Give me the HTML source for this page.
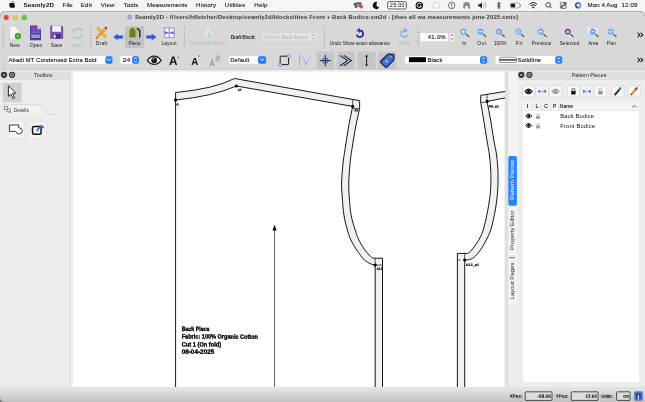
<!DOCTYPE html>
<html><head><meta charset="utf-8"><title>Seamly2D</title>
<style>
html,body{margin:0;padding:0}
body{width:645px;height:402px;overflow:hidden;background:#ececec;font-family:"Liberation Sans",sans-serif;position:relative}
svg{position:absolute;left:0;top:0;will-change:transform}
.t{position:absolute;white-space:nowrap;margin:0;padding:0;will-change:transform}
</style></head><body>
<svg width="645" height="402" viewBox="0 0 645 402">
<defs>
<linearGradient id="gs" x1="0" y1="0" x2="0" y2="1"><stop offset="0" stop-color="#e3e3e3"/><stop offset="1" stop-color="#c2c2c2"/></linearGradient>
<linearGradient id="gb" x1="0" y1="0" x2="0" y2="1"><stop offset="0" stop-color="#3a8ffa"/><stop offset="1" stop-color="#176ff0"/></linearGradient>
<linearGradient id="gpage" x1="0" y1="0" x2="1" y2="1"><stop offset="0" stop-color="#faf8f0"/><stop offset="0.5" stop-color="#f4f4f4"/><stop offset="1" stop-color="#d0d0d0"/></linearGradient>
</defs>
<rect x="0.00" y="0.00" width="645.00" height="11.00" fill="#f5f5f5"/>
<rect x="0.00" y="11.00" width="645.00" height="60.00" fill="#d8d8d8"/>
<path d="M0 10.500 H645 V16.500 Q645 11.300 639.800 11.300 H5.200 Q0 11.300 0 16.500 Z" fill="#f5f5f5"/>
<path d="M0.200 16.500 Q0.200 11.500 5.200 11.500 H639.800 Q644.800 11.500 644.800 16.500" fill="none" stroke="#a9a9a9" stroke-width="0.900"/>
<rect x="5.00" y="12.00" width="635.00" height="0.70" fill="#e2e2e2"/>
<rect x="0.00" y="69.20" width="645.00" height="0.80" fill="#c9c9c9"/>
<rect x="0.00" y="70.00" width="645.00" height="1.20" fill="#e6e6e6"/>
<rect x="0.00" y="71.20" width="645.00" height="331.00" fill="#ececec"/>
<rect x="70.70" y="70.00" width="436.00" height="318.00" fill="#f0f0f0"/>
<rect x="73.30" y="72.40" width="431.40" height="314.20" fill="#ffffff"/>
<rect x="70.00" y="71.20" width="0.70" height="317.00" fill="#d0d0d0"/>
<rect x="0.00" y="388.60" width="645.00" height="13.40" fill="url(#gs)"/>
<rect x="0.00" y="387.60" width="645.00" height="0.70" fill="#d4d4d4"/>
<path d="M0 402 V397.500 Q0.300 401.700 4.600 402 Z" fill="#777"/>
<path transform="translate(8.300,0.400) scale(0.440)" d="M12.2 5.2c-1 0-2.2.6-3 .6-.9 0-2-.6-3.100-.6C3.900 5.200 2 6.900 2 10c0 3.200 2.200 7 4 7 .9 0 1.600-.6 2.800-.6 1.200 0 1.700.6 2.800.6 1.800 0 3.700-3.200 4-5-1.600-.7-2.400-2-2.400-3.300 0-1.300.7-2.300 1.800-3-.8-.4-1.800-.5-2.800-.5zM11.500 1c-1.400.3-2.700 1.700-2.500 3.500 1.500-.1 2.800-1.600 2.500-3.500z" fill="#111"/>
<circle cx="355.3" cy="4.2" r="1.5" fill="#444"/>
<circle cx="357.6" cy="3.2" r="1.5" fill="#777"/>
<circle cx="360.0" cy="3.6" r="1.5" fill="#555"/>
<circle cx="356.0" cy="6.6" r="1.5" fill="#666"/>
<circle cx="358.6" cy="5.6" r="1.5" fill="#888"/>
<circle cx="361.2" cy="6.6" r="1.9" fill="#e5483c"/>
<path d="M377.4 2.0 A3.6 3.6 0 1 0 379.3 7.6 A3.3 3.3 0 0 1 377.4 2.0 Z" fill="#111"/>
<rect x="387.60" y="1.60" width="18.80" height="7.40" fill="none" rx="1.60" stroke="#222" stroke-width="0.7"/>
<circle cx="419.3" cy="5.4" r="3.7" fill="#111"/><path d="M421.2 4.2 A2.1 2.1 0 1 0 421.4 6 H419.6" fill="none" stroke="#fff" stroke-width="0.9"/>
<rect x="433.40" y="2.60" width="6.40" height="5.40" fill="none" rx="0.60" stroke="#c4c4c4" stroke-width="0.7"/>
<path d="M432 3 v4.600" stroke="#c4c4c4" stroke-width="0.7" stroke-dasharray="1 0.8"/>
<circle cx="451.7" cy="5.4" r="3.2" fill="none" stroke="#333" stroke-width="0.7"/><path d="M451.7 3.6 v2.200 M451.7 6.6 v0.700" stroke="#333" stroke-width="0.8"/>
<path d="M463.2 8.6 V5.6 A3.4 3.6 0 0 1 470 5.6 V8.6 H468 V6 H465.2 V8.6 Z" fill="#8a8a8a"/>
<path d="M478.3 4.200 h1.600 l2 -1.800 v6 l-2 -1.800 h-1.600 Z" fill="#111"/><path d="M483.4 3.4 q1.400 2 0 4 M485 2.400 q2.200 3 0 6" fill="none" stroke="#999" stroke-width="0.7"/>
<path d="M497.2 3.6 l3.200 3.400 -1.700 1.700 v-6.800 l1.700 1.700 -3.200 3.400" fill="none" stroke="#111" stroke-width="0.7"/>
<rect x="510.20" y="3.10" width="9.60" height="4.80" fill="none" rx="1.30" stroke="#777" stroke-width="0.6"/>
<rect x="510.90" y="3.80" width="4.20" height="3.40" fill="#111" rx="0.70"/>
<rect x="520.20" y="4.60" width="0.80" height="1.80" fill="#777" rx="0.40"/>
<path d="M529.6 4.300 Q533.3 0.900 537 4.300 M530.900 5.800 Q533.3 3.600 535.700 5.800" fill="none" stroke="#111" stroke-width="1"/><circle cx="533.3" cy="7.400" r="0.900" fill="#111"/>
<circle cx="548.2" cy="4.800" r="2.300" fill="none" stroke="#222" stroke-width="0.800"/><path d="M549.900 6.500 l1.800 1.800" stroke="#222" stroke-width="0.900"/>
<rect x="560.20" y="2.40" width="6.20" height="2.60" fill="none" rx="1.20" stroke="#222" stroke-width="0.6"/>
<rect x="560.20" y="5.80" width="6.20" height="2.60" fill="none" rx="1.20" stroke="#222" stroke-width="0.6"/>
<circle cx="564.900" cy="3.700" r="0.900" fill="#222"/><circle cx="561.700" cy="7.100" r="0.900" fill="#222"/>
<circle cx="578" cy="5.300" r="3.100" fill="#3a3f86"/><path d="M578 2.200 a3.100 3.100 0 0 1 0 6.200 Z" fill="#3aa6c4"/><path d="M578 2.200 a3.100 3.100 0 0 0 -2.700 4.600 L578 5.300 Z" fill="#7a4aa8"/><circle cx="578.200" cy="5.300" r="1.400" fill="#fff"/>
<circle cx="6.2" cy="17.5" r="2.75" fill="#ee5f58"/>
<circle cx="15.2" cy="17.5" r="2.75" fill="#f4bd4f"/>
<circle cx="24.3" cy="17.5" r="2.75" fill="#5fc454"/>
<circle cx="6.2" cy="17.5" r="0.9" fill="#8a1712"/>
<circle cx="129.6" cy="17.1" r="2.3" fill="#9a8bc9"/><circle cx="129.6" cy="17.1" r="1.1" fill="#c9c0e6"/>
<path d="M3.4 26.6 V47.4" stroke="#868686" stroke-width="0.9" stroke-dasharray="0.9 1.85"/>
<path d="M90.6 26.6 V47.4" stroke="#868686" stroke-width="0.9" stroke-dasharray="0.9 1.85"/>
<path d="M184.4 26.6 V47.4" stroke="#868686" stroke-width="0.9" stroke-dasharray="0.9 1.85"/>
<path d="M324.4 26.6 V47.4" stroke="#868686" stroke-width="0.9" stroke-dasharray="0.9 1.85"/>
<path d="M418.0 26.6 V47.4" stroke="#868686" stroke-width="0.9" stroke-dasharray="0.9 1.85"/>
<path d="M10 26.400 h6.800 l3.200 3.200 v10.200 h-10 Z" fill="url(#gpage)" stroke="#c9c9c9" stroke-width="0.400"/><path d="M16.800 26.400 v3.200 h3.200 Z" fill="#d9d9d9" stroke="#bdbdbd" stroke-width="0.300"/>
<circle cx="17.900" cy="36.100" r="3.100" fill="#2f9e22"/><circle cx="17.900" cy="36.100" r="1.500" fill="#48c23a"/><path d="M17.900 34.200 v3.800 M16 36.100 h3.800" stroke="#63d455" stroke-width="0.900"/>
<path d="M30 25.400 h7.200 l3.800 3.800 v11 h-11 Z" fill="#5b3fa8"/><path d="M37.200 25.400 v3.800 h3.800 Z" fill="#cfc4ee"/>
<rect x="30.00" y="35.40" width="11.00" height="3.60" fill="#47308f"/>
<rect x="31.40" y="27.60" width="4.60" height="0.60" fill="#8e7bd0"/>
<rect x="31.40" y="29.20" width="4.60" height="0.60" fill="#8e7bd0"/>
<rect x="31.40" y="30.80" width="8.20" height="0.60" fill="#8e7bd0"/>
<rect x="31.40" y="32.40" width="8.20" height="0.60" fill="#8e7bd0"/>
<rect x="31.40" y="34.00" width="8.20" height="0.60" fill="#8e7bd0"/>
<path d="M50.200 25.400 h11.200 l1.800 1.800 v11.600 h-13 Z" fill="#7a4fb6"/>
<rect x="52.20" y="25.60" width="8.80" height="6.20" fill="#f3eff9"/>
<rect x="52.80" y="34.00" width="7.80" height="4.80" fill="#48308a"/>
<rect x="53.60" y="34.60" width="2.00" height="3.60" fill="#e2dbf1"/>
<g opacity="0.45"><path d="M73.200 33 A4.500 4.500 0 0 1 81 30" fill="none" stroke="#7cc47a" stroke-width="1.800"/><path d="M82 34 A4.500 4.500 0 0 1 74.200 37" fill="none" stroke="#7cc47a" stroke-width="1.800"/><path d="M79.600 30.600 l3 0.400 -0.400 -3 Z M75.600 36.400 l-3 -0.400 0.400 3 Z" fill="#7cc47a"/></g>
<path d="M96.400 28.400 l1.800 -1.600 8.600 9.800 -1.800 1.600 Z" fill="#f2b430" stroke="#d18a1c" stroke-width="0.300"/>
<path d="M104.600 27.600 l1.900 1.700 -8 8.600 -2.600 0.900 0.700 -2.600 Z" fill="#f0a23a" stroke="#c9731f" stroke-width="0.300"/><path d="M104.600 27.600 l1.900 1.700 0.900 -1 -1.900 -1.700 Z" fill="#8a1a3a"/><path d="M95.900 38.800 l0.400 -1.300 0.900 0.900 Z" fill="#333"/>
<path d="M113.0 37.0 l5.0 -3.6 v1.9 H123.2 v3.4 H118.0 v1.9 Z" fill="#2c56d8" stroke="#b9c8f3" stroke-width="0.500" stroke-linejoin="round"/>
<path d="M156.7 37.0 l-5.0 -3.6 v1.9 H146.0 v3.4 H151.7 v1.9 Z" fill="#2c56d8" stroke="#b9c8f3" stroke-width="0.500" stroke-linejoin="round"/>
<rect x="125.00" y="26.20" width="19.20" height="21.80" fill="#c1c1c1" rx="0.80"/>
<path d="M129.400 37.500 V31.400 Q129.800 28.600 132.200 27.500 Q135 27.500 135.600 31 V37.500 Z" fill="#717f12" stroke="#a4ad5a" stroke-width="0.400"/>
<path d="M137.200 28.600 Q139.600 29 139.800 32 V37" fill="none" stroke="#16190a" stroke-width="1.300" stroke-linecap="round"/><path d="M136.900 29 V37" stroke="#8a963a" stroke-width="0.500"/>
<rect x="163.80" y="27.50" width="11.00" height="10.50" fill="#9d90da" rx="0.80"/>
<rect x="164.80" y="28.50" width="3.90" height="3.70" fill="#fbfaff" rx="0.40"/>
<rect x="169.90" y="28.50" width="3.90" height="3.70" fill="#fbfaff" rx="0.40"/>
<rect x="164.80" y="33.40" width="3.90" height="3.70" fill="#fbfaff" rx="0.40"/>
<rect x="169.90" y="33.40" width="3.90" height="3.70" fill="#fbfaff" rx="0.40"/>
<path d="M165 31 l3.400 1.750 -3.400 1.750 Z M173.600 31 l-3.400 1.750 3.400 1.750 Z" fill="#5468dc"/>
<g opacity="0.8"><path d="M206.200 27.600 h3 l0.800 3.200 2.800 1.200 1 5.600 h-10 l0.600 -5.200 1.400 -1.400 Z" fill="#e9e9e9" stroke="#c4c4c4" stroke-width="0.400"/><path d="M209.200 32.200 v4 M207.200 34.600 l2 2.200 2 -2.200" stroke="#a8cfa4" stroke-width="1.300" fill="none"/></g>
<rect x="261.20" y="32.70" width="56.30" height="8.50" fill="#e3e3e3" rx="2.00" stroke="#d0d0d0" stroke-width="0.4"/>
<path d="M311.800 36 l1.400 -1.500 1.400 1.500 M311.800 38 l1.400 1.500 1.400 -1.500" fill="none" stroke="#8a8a8a" stroke-width="0.600"/>
<path d="M359.600 30.700 A3.200 3.200 0 1 1 356.800 34.600" fill="none" stroke="#16269a" stroke-width="1.600"/><path d="M356.300 30.500 l3.700 -2.700 v5.200 Z" fill="#2348c8"/>
<path d="M404.600 30.700 A3.200 3.200 0 1 0 407.400 34.600" fill="none" stroke="#8fb0e8" stroke-width="1.600"/><path d="M407.900 30.500 l-3.700 -2.700 v5.200 Z" fill="#7ea4e6"/>
<rect x="420.60" y="33.00" width="27.40" height="8.20" fill="#ffffff" rx="0.60"/>
<rect x="449.40" y="33.00" width="5.00" height="8.20" fill="#fdfdfd" rx="1.60" stroke="#cfcfcf" stroke-width="0.4"/>
<path d="M450.600 36.100 l1.300 -1.500 1.300 1.500 M450.600 38.100 l1.300 1.500 1.300 -1.500" fill="none" stroke="#333" stroke-width="0.700"/>
<path d="M465.8 34.0 l3.000 2.600" stroke="#4c4c4c" stroke-width="1.150" stroke-linecap="round"/>
<circle cx="463.4" cy="31.7" r="3.250" fill="#6a9fe4" stroke="#b7cff0" stroke-width="1.000"/>
<path d="M463.4 31.7 m-1.800 0 h3.600 m-1.800 -1.800 v3.600" stroke="#fff" stroke-width="1.100"/>
<path d="M482.8 34.0 l3.000 2.600" stroke="#4c4c4c" stroke-width="1.150" stroke-linecap="round"/>
<circle cx="480.4" cy="31.7" r="3.250" fill="#6a9fe4" stroke="#b7cff0" stroke-width="1.000"/>
<path d="M480.4 31.7 m-1.800 0 h3.600" stroke="#fff" stroke-width="1.100"/>
<path d="M501.4 34.0 l3.000 2.600" stroke="#4c4c4c" stroke-width="1.150" stroke-linecap="round"/>
<circle cx="499.0" cy="31.7" r="3.250" fill="#6a9fe4" stroke="#b7cff0" stroke-width="1.000"/>
<circle cx="499.0" cy="31.7" r="1.300" fill="#cfe0f7"/>
<path d="M520.8 34.0 l3.000 2.600" stroke="#4c4c4c" stroke-width="1.150" stroke-linecap="round"/>
<circle cx="518.4" cy="31.7" r="3.250" fill="#6fa5e8" stroke="#b7cff0" stroke-width="1.000"/>
<path d="M518.4 31.7 m-1.900 -1.900 l3.800 3.800 m0 -3.800 l-3.800 3.800" stroke="#fff" stroke-width="0.800"/>
<path d="M543.2 34.0 l3.000 2.600" stroke="#4c4c4c" stroke-width="1.150" stroke-linecap="round"/>
<circle cx="540.8" cy="31.7" r="3.250" fill="#6a9fe4" stroke="#b7cff0" stroke-width="1.000"/>
<path d="M540.8 31.7 m1.800 0 h-3.200 m1.200 -1.200 l-1.400 1.200 1.400 1.200" stroke="#fff" stroke-width="0.900" fill="none"/>
<path d="M570.2 34.0 l3.000 2.600" stroke="#4c4c4c" stroke-width="1.150" stroke-linecap="round"/>
<circle cx="567.8" cy="31.7" r="3.250" fill="#8e2257" stroke="#b7cff0" stroke-width="1.000"/>
<circle cx="567.8" cy="31.7" r="1.500" fill="#e9cfdc"/>
<rect x="587.40" y="27.70" width="10.00" height="6.40" fill="#f7f9fd" rx="0.80" stroke="#c3d3ec" stroke-width="0.6"/>
<path d="M595.2 34.0 l3.000 2.600" stroke="#4c4c4c" stroke-width="1.150" stroke-linecap="round"/>
<circle cx="592.8" cy="31.7" r="3.250" fill="#6a9fe4" stroke="#b7cff0" stroke-width="1.000"/>
<path d="M592.8 31.7 m-1.500 0 h3" stroke="#fff" stroke-width="0.900"/>
<path d="M613.2 34.0 l3.000 2.600" stroke="#4c4c4c" stroke-width="1.150" stroke-linecap="round"/>
<circle cx="610.8" cy="31.7" r="3.250" fill="#5c98e6" stroke="#b7cff0" stroke-width="1.000"/>
<path d="M610.8 31.7 m-2.600 0 h5.200 m-2.600 -2.600 v5.200" stroke="#dfeafa" stroke-width="0.900"/>
<path d="M637.600 32.700 l2.200 2.200 -2.200 2.200 M640.600 32.700 l2.200 2.200 -2.200 2.200" fill="none" stroke="#1c1c1c" stroke-width="1.100"/>
<path d="M3.4 52.5 V68.5" stroke="#b4b4b4" stroke-width="0.8" stroke-dasharray="0.9 1.85"/>
<path d="M272.9 52.5 V68.5" stroke="#b4b4b4" stroke-width="0.8" stroke-dasharray="0.9 1.85"/>
<path d="M400.2 52.5 V68.5" stroke="#b4b4b4" stroke-width="0.8" stroke-dasharray="0.9 1.85"/>
<rect x="8.00" y="56.10" width="104.60" height="7.70" fill="#ffffff" rx="2.00"/>
<rect x="105.40" y="56.10" width="7.20" height="7.70" fill="url(#gb)" rx="2.00"/>
<path d="M107.30 59.25 l1.700 1.700 1.700 -1.700" fill="none" stroke="#fff" stroke-width="0.950" stroke-linecap="square"/>
<rect x="120.00" y="56.10" width="19.00" height="7.70" fill="#ffffff" rx="2.00"/>
<rect x="132.10" y="56.10" width="6.90" height="7.70" fill="url(#gb)" rx="2.00"/>
<path d="M134.15 59.15 l1.400 -1.400 1.400 1.400 M134.15 60.85 l1.400 1.400 1.400 -1.400" fill="none" stroke="#fff" stroke-width="0.850"/>
<path d="M147.300 60.300 Q150.400 56.200 154.200 56.200 Q158 56.200 161.100 60.300 Q158 64.400 154.200 64.400 Q150.400 64.400 147.300 60.300 Z" fill="#f4f4f4" stroke="#1c1c1c" stroke-width="1.300" stroke-linejoin="round"/><circle cx="154.200" cy="60.200" r="2.900" fill="#1c1c1c"/><circle cx="153.300" cy="59.200" r="0.900" fill="#8a8a8a"/>
<path d="M177.400 58 l1.100 -1.800 1.100 1.800 Z" fill="#4a62e0"/>
<path d="M197.900 55.500 l1.100 1.800 1.100 -1.800 Z" fill="#4a62e0"/>
<path d="M210.300 66.500 l2 -7.200 2 7.200 M211.100 64.200 h2.500" fill="none" stroke="#8f8f8f" stroke-width="0.900"/><path d="M214.600 59.600 l3.800 -4.200 2.600 2.400 -3.800 4.200 Z" fill="#b4b4b4"/><path d="M217.200 55 l1.600 -1.600 M216.400 57 v-2.400" stroke="#9a9a9a" stroke-width="0.600"/>
<rect x="229.00" y="56.10" width="37.20" height="7.70" fill="#ffffff" rx="2.00"/>
<rect x="258.00" y="56.10" width="8.20" height="7.70" fill="url(#gb)" rx="2.00"/>
<path d="M260.40 59.25 l1.700 1.700 1.700 -1.700" fill="none" stroke="#fff" stroke-width="0.950" stroke-linecap="square"/>
<rect x="280.20" y="56.20" width="8.40" height="8.40" fill="none" rx="0.60" stroke="#1b1b1b" stroke-width="1.0"/>
<circle cx="288.600" cy="56.200" r="1.500" fill="#d9e6fa" stroke="#3a5fb0" stroke-width="0.600"/><circle cx="280.200" cy="64.600" r="1.500" fill="#d9e6fa" stroke="#3a5fb0" stroke-width="0.600"/>
<path d="M299.600 65.800 V55.600 M300 55.600 Q304 56 305.600 64.800 Q307.600 60 310.800 56.400" fill="none" stroke="#98a3d4" stroke-width="0.900"/><path d="M298.600 55.200 h2.400 M304.400 64.800 h2.400" stroke="#b9c0e4" stroke-width="0.500"/>
<rect x="316.60" y="51.40" width="17.80" height="18.00" fill="#c6c6c6" rx="0.80"/>
<rect x="337.00" y="51.40" width="18.00" height="18.00" fill="#c6c6c6" rx="0.80"/>
<rect x="357.50" y="51.40" width="18.10" height="18.00" fill="#c6c6c6" rx="0.80"/>
<rect x="377.80" y="51.40" width="18.40" height="18.00" fill="#c6c6c6" rx="0.80"/>
<path d="M319.800 60.600 h11 M325.300 55 v11.200" stroke="#1a1a1a" stroke-width="0.950"/><circle cx="325.300" cy="60.600" r="2.600" fill="none" stroke="#3a62c4" stroke-width="1.100"/>
<path d="M340 55.400 l7.600 5.200 -7.600 5.200 M343.800 55.400 l7.600 5.200 -7.600 5.200" fill="none" stroke="#1b2448" stroke-width="1.100"/>
<path d="M366.600 56.400 V65" stroke="#111" stroke-width="0.900"/><path d="M366.600 54.600 l1.400 2.200 h-2.800 Z M366.600 66.600 l1.400 -2.200 h-2.800 Z" fill="#111"/>
<path d="M380.800 61 l6.600 -6.400 q0.500 -0.500 1.200 -0.500 l4.600 0.200 q0.900 0.100 0.900 1 l-0.200 4.200 q0 0.700 -0.500 1.200 l-6.400 6.400 q-0.800 0.700 -1.600 0 l-4.600 -4.500 q-0.700 -0.800 0 -1.600 Z" fill="#3d6fd0" stroke="#131d40" stroke-width="1.100"/><circle cx="390.800" cy="57" r="1.100" fill="#e8eefb" stroke="#17264f" stroke-width="0.400"/><circle cx="386.600" cy="61.400" r="1.100" fill="#9db8ea" stroke="#dfe8fa" stroke-width="0.400"/>
<rect x="405.00" y="56.10" width="82.20" height="7.70" fill="#ffffff" rx="2.00"/>
<rect x="480.00" y="56.10" width="7.20" height="7.70" fill="url(#gb)" rx="2.00"/>
<path d="M482.20 59.15 l1.400 -1.400 1.400 1.400 M482.20 60.85 l1.400 1.400 1.400 -1.400" fill="none" stroke="#fff" stroke-width="0.850"/>
<rect x="409.00" y="57.20" width="17.00" height="5.00" fill="#000"/>
<rect x="495.40" y="56.10" width="67.00" height="7.70" fill="#ffffff" rx="2.00"/>
<rect x="555.20" y="56.10" width="7.20" height="7.70" fill="url(#gb)" rx="2.00"/>
<path d="M557.40 59.15 l1.400 -1.400 1.400 1.400 M557.40 60.85 l1.400 1.400 1.400 -1.400" fill="none" stroke="#fff" stroke-width="0.850"/>
<rect x="499.40" y="57.20" width="17.20" height="5.20" fill="#fff" rx="1.00" stroke="#444" stroke-width="0.6"/>
<path d="M499.600 59.900 h16.800" stroke="#111" stroke-width="1.200"/>
<path d="M637.600 57.800 l2.200 2.200 -2.200 2.200 M640.600 57.800 l2.200 2.200 -2.200 2.200" fill="none" stroke="#1c1c1c" stroke-width="1.100"/>
<rect x="0.00" y="71.20" width="70.30" height="8.20" fill="#e0e0e0"/>
<rect x="0.00" y="79.40" width="70.30" height="0.50" fill="#d0d0d0"/>
<circle cx="4.0" cy="74.800" r="3.100" fill="#2f2f2f"/><path d="M2.80 73.600 l2.400 2.400 m0 -2.400 l-2.400 2.400" stroke="#e6e6e6" stroke-width="0.700"/>
<circle cx="12.1" cy="74.800" r="3.100" fill="#2f2f2f"/><circle cx="12.1" cy="74.800" r="1.600" fill="none" stroke="#e6e6e6" stroke-width="0.600"/><path d="M11.10 75.800 l2 -2" stroke="#e6e6e6" stroke-width="0.500"/>
<rect x="2.60" y="83.00" width="19.00" height="19.00" fill="#cfcfcf" rx="0.60"/>
<path d="M8.400 85.700 V96.400 L10.900 94.100 L13 98.600 L14.700 97.800 L12.600 93.400 L15.800 93.100 Z" fill="#fff" stroke="#1a1a1a" stroke-width="0.950" stroke-linejoin="round"/>
<path d="M2.800 114.400 V105.600 Q2.800 104.600 3.800 104.600 H37.600 Q39 104.600 39.800 105.600 L47 113.400 Q47.800 114.400 49.200 114.400 H56" fill="#f1f1f1" stroke="#cdcbc4" stroke-width="0.600"/>
<rect x="4.600" y="106.800" width="3.200" height="3" fill="none" stroke="#444" stroke-width="0.500"/><rect x="7" y="109" width="3.200" height="3" fill="#ececec" stroke="#444" stroke-width="0.500"/><path d="M9 111.200 l2 2" stroke="#444" stroke-width="0.600"/>
<rect x="7.60" y="121.30" width="17.00" height="17.00" fill="#f4f4f4" rx="0.60" stroke="#dadada" stroke-width="0.5"/>
<rect x="29.40" y="121.30" width="17.00" height="17.00" fill="#f4f4f4" rx="0.60" stroke="#dadada" stroke-width="0.5"/>
<path d="M9.400 125 h9.200 v2.600 q3.600 0.500 3.800 3.200 q-0.200 3 -3.400 3.200 q-2.400 -0.200 -3.200 -2.600 h-6.400 Z" fill="#fff" stroke="#222" stroke-width="0.900" stroke-linejoin="round"/>
<rect x="32.500" y="126.500" width="8.600" height="7.800" rx="1.500" fill="#f4f4f4" stroke="#111" stroke-width="1.500"/><path d="M37 131.400 q0.800 -3.800 4.600 -4.200" fill="none" stroke="#2f67d8" stroke-width="1.500"/><path d="M40.600 124.600 l3.800 2.600 -3.800 2.600 Z" fill="#2f67d8"/>
<rect x="504.70" y="71.20" width="3.70" height="317.00" fill="#dedede"/>
<rect x="508.40" y="71.20" width="8.80" height="233.00" fill="#f3f3f3"/>
<rect x="518.00" y="71.20" width="127.00" height="8.30" fill="#e0e0e0"/>
<rect x="518.00" y="79.50" width="127.00" height="0.50" fill="#d0d0d0"/>
<circle cx="521.3" cy="74.800" r="3.100" fill="#2f2f2f"/><path d="M520.10 73.600 l2.400 2.400 m0 -2.400 l-2.400 2.400" stroke="#e6e6e6" stroke-width="0.700"/>
<circle cx="529.4" cy="74.800" r="3.100" fill="#2f2f2f"/><circle cx="529.4" cy="74.800" r="1.600" fill="none" stroke="#e6e6e6" stroke-width="0.600"/><path d="M528.40 75.800 l2 -2" stroke="#e6e6e6" stroke-width="0.500"/>
<rect x="508.30" y="156.10" width="8.60" height="49.60" fill="#2a84f6" rx="1.80"/>
<rect x="509.30" y="256.90" width="5.60" height="1.30" fill="#3f8ff5" rx="0.30"/>
<rect x="522.50" y="85.70" width="12.20" height="11.40" fill="#f8f8f8" rx="0.50" stroke="#cdcdcd" stroke-width="0.55"/>
<rect x="536.00" y="85.70" width="12.20" height="11.40" fill="#f8f8f8" rx="0.50" stroke="#cdcdcd" stroke-width="0.55"/>
<rect x="549.50" y="85.70" width="12.20" height="11.40" fill="#f8f8f8" rx="0.50" stroke="#cdcdcd" stroke-width="0.55"/>
<rect x="567.30" y="85.70" width="12.20" height="11.40" fill="#f8f8f8" rx="0.50" stroke="#cdcdcd" stroke-width="0.55"/>
<rect x="580.80" y="85.70" width="12.20" height="11.40" fill="#f8f8f8" rx="0.50" stroke="#cdcdcd" stroke-width="0.55"/>
<rect x="594.30" y="85.70" width="12.20" height="11.40" fill="#f8f8f8" rx="0.50" stroke="#cdcdcd" stroke-width="0.55"/>
<rect x="611.80" y="85.70" width="12.20" height="11.40" fill="#f8f8f8" rx="0.50" stroke="#cdcdcd" stroke-width="0.55"/>
<rect x="628.00" y="85.70" width="12.20" height="11.40" fill="#f8f8f8" rx="0.50" stroke="#cdcdcd" stroke-width="0.55"/>
<g transform="translate(528.60,91.40) scale(1.00)"><path d="M-3.500 0 Q-1.800 -2.300 0 -2.300 Q1.800 -2.300 3.500 0 Q1.800 2.300 0 2.300 Q-1.800 2.300 -3.500 0 Z" fill="none" stroke="#111" stroke-width="1.100" stroke-linejoin="round"/><circle r="1.700" fill="#111"/></g>
<rect x="536.30" y="86.00" width="11.60" height="10.80" fill="#eef3fb" rx="0.40"/>
<path d="M538.30 89.70 l3 1.700 -3 1.700 Z M545.90 89.70 l-3 1.700 3 1.700 Z" fill="#2f62c8"/><path d="M542.10 89.40 v4" stroke="#7fa3e6" stroke-width="0.500"/>
<g transform="translate(555.60,91.40) scale(1.00)"><path d="M-3.500 0 Q-1.800 -2.300 0 -2.300 Q1.800 -2.300 3.500 0 Q1.800 2.300 0 2.300 Q-1.800 2.300 -3.500 0 Z" fill="none" stroke="#9a9a9a" stroke-width="1.100" stroke-linejoin="round"/><circle r="1.700" fill="#9a9a9a"/></g>
<g opacity="1"><rect x="571.20" y="91.00" width="4.400" height="3.600" rx="0.500" fill="#111"/><path d="M572.00 91.00 v-1.200 a1.400 1.400 0 0 1 2.800 0 v1.200" fill="none" stroke="#111" stroke-width="0.700"/></g>
<rect x="581.10" y="86.00" width="11.60" height="10.80" fill="#eef3fb" rx="0.40"/>
<path d="M583.10 89.70 l3 1.700 -3 1.700 Z M590.70 89.70 l-3 1.700 3 1.700 Z" fill="#2f62c8"/><path d="M586.90 89.40 v4" stroke="#7fa3e6" stroke-width="0.500"/>
<g opacity="1"><rect x="598.20" y="91.00" width="4.400" height="3.600" rx="0.500" fill="#9a9a9a"/><path d="M599.00 91.00 v-1.200 a1.400 1.400 0 0 1 2.800 0 v1.200" fill="none" stroke="#9a9a9a" stroke-width="0.700"/></g>
<g transform="translate(611.80,0)"><path d="M3.300 94.500 L8.600 88.300" stroke="#26324f" stroke-width="2.000" stroke-linecap="round"/><path d="M7.700 89.300 L8.700 88.100" stroke="#4f7fd8" stroke-width="2.000" stroke-linecap="round"/><path d="M2.700 95.300 l0.300 -1.500 1.100 0.900 Z" fill="#333"/></g>
<g transform="translate(628.00,0)"><path d="M3.300 94.500 L8.600 88.300" stroke="#e08a2c" stroke-width="2.000" stroke-linecap="round"/><path d="M7.700 89.300 L8.700 88.100" stroke="#c0392b" stroke-width="2.000" stroke-linecap="round"/><path d="M2.700 95.300 l0.300 -1.500 1.100 0.900 Z" fill="#333"/></g>
<rect x="522.60" y="101.40" width="117.00" height="281.40" fill="#ffffff" stroke="#dcdcdc" stroke-width="0.4"/>
<rect x="522.60" y="101.40" width="117.00" height="9.20" fill="#f2f2f2"/>
<rect x="522.60" y="110.60" width="117.00" height="0.40" fill="#d6d6d6"/>
<rect x="531.80" y="101.40" width="0.50" height="9.20" fill="#d0d0d0"/>
<rect x="541.60" y="101.40" width="0.50" height="9.20" fill="#d0d0d0"/>
<rect x="550.60" y="101.40" width="0.50" height="9.20" fill="#d0d0d0"/>
<rect x="558.80" y="101.40" width="0.50" height="9.20" fill="#d0d0d0"/>
<path d="M632.400 107.400 l1.900 -1.900 1.900 1.900" fill="none" stroke="#333" stroke-width="0.800"/>
<g transform="translate(528.70,116.00) scale(0.88)"><path d="M-3.500 0 Q-1.800 -2.300 0 -2.300 Q1.800 -2.300 3.500 0 Q1.800 2.300 0 2.300 Q-1.800 2.300 -3.500 0 Z" fill="none" stroke="#111" stroke-width="1.100" stroke-linejoin="round"/><circle r="1.700" fill="#111"/></g>
<g transform="translate(528.70,125.50) scale(0.88)"><path d="M-3.500 0 Q-1.800 -2.300 0 -2.300 Q1.800 -2.300 3.500 0 Q1.800 2.300 0 2.300 Q-1.800 2.300 -3.500 0 Z" fill="none" stroke="#111" stroke-width="1.100" stroke-linejoin="round"/><circle r="1.700" fill="#111"/></g>
<rect x="536.10" y="115.90" width="3.800" height="3" rx="0.400" fill="#9c9c9c"/><path d="M536.85 115.90 v-1 a1.150 1.150 0 0 1 2.300 0 v1" fill="none" stroke="#9c9c9c" stroke-width="0.600"/>
<rect x="536.10" y="125.40" width="3.800" height="3" rx="0.400" fill="#9c9c9c"/><path d="M536.85 125.40 v-1 a1.150 1.150 0 0 1 2.300 0 v1" fill="none" stroke="#9c9c9c" stroke-width="0.600"/>
<svg x="73" y="72" width="431.8" height="315" viewBox="73 72 431.8 315" overflow="hidden">
<path d="M175.60 389 V92.5 Q214.3 88.9 234.5 78.5 L359.65 100.7 V108.4 C358.43 113.93 357.18 118.90 356.00 125.00 C354.82 131.10 353.57 138.83 352.60 145.00 C351.63 151.17 350.83 155.83 350.20 162.00 C349.57 168.17 348.97 176.33 348.80 182.00 C348.63 187.67 348.82 190.50 349.20 196.00 C349.58 201.50 350.10 209.33 351.10 215.00 C352.10 220.67 353.90 225.83 355.20 230.00 C356.50 234.17 357.28 236.67 358.90 240.00 C360.52 243.33 362.50 246.97 364.90 250.00 C367.30 253.03 370.97 257.70 373.30 258.20  H382.5 V389 L375.2 389 V265 C371.77 265.00 367.97 262.80 364.90 260.30 C361.83 257.80 359.03 253.38 356.70 250.00 C354.37 246.62 352.45 243.33 350.90 240.00 C349.35 236.67 348.57 234.17 347.40 230.00 C346.23 225.83 344.77 220.67 343.90 215.00 C343.03 209.33 342.58 201.50 342.20 196.00 C341.82 190.50 341.43 187.67 341.60 182.00 C341.77 176.33 342.52 168.17 343.20 162.00 C343.88 155.83 344.75 151.17 345.70 145.00 C346.65 138.83 347.73 131.43 348.90 125.00 C350.07 118.57 351.43 112.60 352.70 106.40  L236.3 86 Q213.7 96.2 175.60 100 Z" fill="#f1f1f1"/>
<path d="M175.60 389 V92.5 Q214.3 88.9 234.5 78.5 L359.65 100.7 V108.4 C358.43 113.93 357.18 118.90 356.00 125.00 C354.82 131.10 353.57 138.83 352.60 145.00 C351.63 151.17 350.83 155.83 350.20 162.00 C349.57 168.17 348.97 176.33 348.80 182.00 C348.63 187.67 348.82 190.50 349.20 196.00 C349.58 201.50 350.10 209.33 351.10 215.00 C352.10 220.67 353.90 225.83 355.20 230.00 C356.50 234.17 357.28 236.67 358.90 240.00 C360.52 243.33 362.50 246.97 364.90 250.00 C367.30 253.03 370.97 257.70 373.30 258.20  H382.5 V389" fill="none" stroke="#0c0c0c" stroke-width="0.95" stroke-linejoin="miter"/>
<path d="M375.2 389 V265 C371.77 265.00 367.97 262.80 364.90 260.30 C361.83 257.80 359.03 253.38 356.70 250.00 C354.37 246.62 352.45 243.33 350.90 240.00 C349.35 236.67 348.57 234.17 347.40 230.00 C346.23 225.83 344.77 220.67 343.90 215.00 C343.03 209.33 342.58 201.50 342.20 196.00 C341.82 190.50 341.43 187.67 341.60 182.00 C341.77 176.33 342.52 168.17 343.20 162.00 C343.88 155.83 344.75 151.17 345.70 145.00 C346.65 138.83 347.73 131.43 348.90 125.00 C350.07 118.57 351.43 112.60 352.70 106.40  L236.3 86 Q213.7 96.2 175.60 100" fill="none" stroke="#0c0c0c" stroke-width="0.95"/>
<path d="M352.7 99.5 V106.4 M352.7 108.4 H359.6 M375.2 258.2 V265 M375.2 265 H382.5" stroke="#111" stroke-width="0.7" fill="none"/>
<path d="M520 89 L480.7 95.4 V102.4 C481.70 108.27 482.67 113.73 483.70 120.00 C484.73 126.27 485.95 134.17 486.90 140.00 C487.85 145.83 488.75 149.67 489.40 155.00 C490.05 160.33 490.57 167.00 490.80 172.00 C491.03 177.00 490.92 181.17 490.80 185.00 C490.68 188.83 490.60 190.83 490.10 195.00 C489.60 199.17 488.85 204.50 487.80 210.00 C486.75 215.50 485.13 223.33 483.80 228.00 C482.47 232.67 481.53 234.67 479.80 238.00 C478.07 241.33 475.47 245.43 473.40 248.00 C471.33 250.57 469.40 253.00 467.40 253.40  H457.4 V389 L464.7 389 V260 C467.37 260.00 468.20 259.97 469.90 259.40 C471.60 258.83 472.92 258.50 474.90 256.60 C476.88 254.70 479.73 251.10 481.80 248.00 C483.87 244.90 485.72 241.33 487.30 238.00 C488.88 234.67 489.97 232.67 491.30 228.00 C492.63 223.33 494.30 215.50 495.30 210.00 C496.30 204.50 496.87 199.17 497.30 195.00 C497.73 190.83 497.78 188.83 497.90 185.00 C498.02 181.17 498.22 177.00 498.00 172.00 C497.78 167.00 497.30 160.33 496.60 155.00 C495.90 149.67 494.80 145.83 493.80 140.00 C492.80 134.17 491.73 126.43 490.60 120.00 C489.47 113.57 488.20 107.60 487.00 101.40  L520 95 Z" fill="#f1f1f1"/>
<path d="M520 89 L480.7 95.4 V102.4 C481.70 108.27 482.67 113.73 483.70 120.00 C484.73 126.27 485.95 134.17 486.90 140.00 C487.85 145.83 488.75 149.67 489.40 155.00 C490.05 160.33 490.57 167.00 490.80 172.00 C491.03 177.00 490.92 181.17 490.80 185.00 C490.68 188.83 490.60 190.83 490.10 195.00 C489.60 199.17 488.85 204.50 487.80 210.00 C486.75 215.50 485.13 223.33 483.80 228.00 C482.47 232.67 481.53 234.67 479.80 238.00 C478.07 241.33 475.47 245.43 473.40 248.00 C471.33 250.57 469.40 253.00 467.40 253.40  H457.4 V389" fill="none" stroke="#0c0c0c" stroke-width="0.95"/>
<path d="M464.7 389 V260 C467.37 260.00 468.20 259.97 469.90 259.40 C471.60 258.83 472.92 258.50 474.90 256.60 C476.88 254.70 479.73 251.10 481.80 248.00 C483.87 244.90 485.72 241.33 487.30 238.00 C488.88 234.67 489.97 232.67 491.30 228.00 C492.63 223.33 494.30 215.50 495.30 210.00 C496.30 204.50 496.87 199.17 497.30 195.00 C497.73 190.83 497.78 188.83 497.90 185.00 C498.02 181.17 498.22 177.00 498.00 172.00 C497.78 167.00 497.30 160.33 496.60 155.00 C495.90 149.67 494.80 145.83 493.80 140.00 C492.80 134.17 491.73 126.43 490.60 120.00 C489.47 113.57 488.20 107.60 487.00 101.40  L520 95" fill="none" stroke="#0c0c0c" stroke-width="0.95"/>
<path d="M487 94.600 V101.400 M480.700 102.400 H485 M464.700 253.400 V260 M457.400 260 H460.500" stroke="#111" stroke-width="0.700" fill="none"/>
<path d="M274.550 389 V230" stroke="#3a3a3a" stroke-width="0.800"/><path d="M274.550 224.800 l2.050 5.800 h-4.100 Z" fill="#0a0a0a"/>
<circle cx="175.6" cy="100.0" r="1.600" fill="#000"/>
<circle cx="236.3" cy="86.0" r="1.600" fill="#000"/>
<circle cx="352.7" cy="106.4" r="1.600" fill="#000"/>
<circle cx="375.1" cy="265.0" r="1.600" fill="#000"/>
<circle cx="487.0" cy="101.4" r="1.600" fill="#000"/>
<circle cx="464.7" cy="260.0" r="1.600" fill="#000"/>
</svg>
<rect x="525.20" y="391.80" width="26.80" height="8.60" fill="#dcdcdc" rx="0.70" stroke="#2c2c2c" stroke-width="0.8"/>
<rect x="571.20" y="391.80" width="26.80" height="8.60" fill="#dcdcdc" rx="0.70" stroke="#2c2c2c" stroke-width="0.8"/>
<rect x="616.60" y="391.80" width="13.40" height="8.60" fill="#dcdcdc" rx="0.70" stroke="#2c2c2c" stroke-width="0.8"/>
<rect x="634.40" y="391.60" width="8.20" height="8.80" fill="#1f4fb0" rx="0.80"/>
<rect x="635.20" y="392.40" width="6.60" height="7.20" fill="none" rx="0.50" stroke="#9db9ee" stroke-width="0.5"/>
<g font-family="'Liberation Sans',sans-serif" style="white-space:pre">
<text transform="translate(23.57,7.11)" font-size="6.15" fill="#111" letter-spacing="0.137" font-weight="bold">Seamly2D</text>
<text transform="translate(62.57,7.11)" font-size="6.15" fill="#111" letter-spacing="0.084" stroke="#111" stroke-width="0.08">File</text>
<text transform="translate(80.87,7.11)" font-size="6.15" fill="#111" letter-spacing="0.154" stroke="#111" stroke-width="0.08">Edit</text>
<text transform="translate(100.87,7.11)" font-size="6.15" fill="#111" letter-spacing="0.114" stroke="#111" stroke-width="0.08">View</text>
<text transform="translate(123.57,7.11)" font-size="6.15" fill="#111" letter-spacing="0.126" stroke="#111" stroke-width="0.08">Tools</text>
<text transform="translate(147.07,7.11)" font-size="6.15" fill="#111" letter-spacing="-0.038" stroke="#111" stroke-width="0.08">Measurements</text>
<text transform="translate(196.07,7.11)" font-size="6.15" fill="#111" letter-spacing="0.138" stroke="#111" stroke-width="0.08">History</text>
<text transform="translate(224.87,7.11)" font-size="6.15" fill="#111" letter-spacing="0.093" stroke="#111" stroke-width="0.08">Utilities</text>
<text transform="translate(254.37,7.11)" font-size="6.15" fill="#111" letter-spacing="0.104" stroke="#111" stroke-width="0.08">Help</text>
<text transform="translate(587.57,7.11)" font-size="6.15" fill="#111" letter-spacing="0.057" stroke="#111" stroke-width="0.08">Mon 4 Aug</text>
<text transform="translate(621.57,7.11)" font-size="6.15" fill="#111" letter-spacing="0.118" stroke="#111" stroke-width="0.08">12:09</text>
<text transform="translate(389.82,7.34)" font-size="5.40" fill="#111" letter-spacing="0.311">25:00</text>
<text transform="translate(134.89,19.32)" font-size="5.90" fill="#3a3a3a" letter-spacing="0.125" font-weight="bold">Seamly2D - /Users/hfletcher/Desktop/seamly2d/blocks/theo Front + Back Bodice.sm2d - [theo all wa measurements june 2025.smis]</text>
<text transform="translate(9.75,46.80)" font-size="5.00" fill="#1c1c1c" letter-spacing="-0.051">New</text>
<text transform="translate(31.20,38.21)" font-size="2.80" fill="#ffffff" letter-spacing="0.337" font-weight="bold">SM2D</text>
<text transform="translate(29.65,46.80)" font-size="5.00" fill="#1c1c1c" letter-spacing="0.123">Open</text>
<text transform="translate(50.85,46.80)" font-size="5.00" fill="#1c1c1c">Save</text>
<text transform="translate(71.65,46.80)" font-size="5.00" fill="#b4b4b4" letter-spacing="0.061">Sync</text>
<text transform="translate(95.85,45.30)" font-size="5.00" fill="#1c1c1c" letter-spacing="0.141">Draft</text>
<text transform="translate(128.45,45.30)" font-size="5.00" fill="#1c1c1c" letter-spacing="-0.102">Piece</text>
<text transform="translate(161.55,45.30)" font-size="5.00" fill="#1c1c1c">Layout</text>
<text transform="translate(189.65,45.30)" font-size="5.00" fill="#b6b6b6" letter-spacing="-0.053">New Draft Block</text>
<text transform="translate(230.87,38.69)" font-size="4.70" fill="#262626" letter-spacing="-0.144" font-weight="bold">Draft Block:</text>
<text transform="translate(264.66,38.76)" font-size="4.90" fill="#b2b2b2" letter-spacing="-0.032">Front + Back Bodice</text>
<text transform="translate(329.65,45.30)" font-size="5.00" fill="#1c1c1c" letter-spacing="-0.117">Undo Show seam allowance</text>
<text transform="translate(399.05,45.30)" font-size="5.00" fill="#b6b6b6" letter-spacing="-0.218">Redo</text>
<text transform="translate(427.78,39.26)" font-size="6.00" fill="#1a1a1a" letter-spacing="0.207" stroke="#1a1a1a" stroke-width="0.12">41.0%</text>
<text transform="translate(462.15,45.30)" font-size="5.00" fill="#1c1c1c" letter-spacing="0.030">In</text>
<text transform="translate(477.15,45.30)" font-size="5.00" fill="#1c1c1c" letter-spacing="0.571">Out</text>
<text transform="translate(493.65,45.30)" font-size="5.00" fill="#1c1c1c" letter-spacing="0.037">100%</text>
<text transform="translate(515.85,45.30)" font-size="5.00" fill="#1c1c1c" letter-spacing="0.473">Fit</text>
<text transform="translate(531.85,45.30)" font-size="5.00" fill="#1c1c1c" letter-spacing="0.007">Previous</text>
<text transform="translate(559.45,45.30)" font-size="5.00" fill="#1c1c1c" letter-spacing="0.063">Selected</text>
<text transform="translate(588.15,45.30)" font-size="5.00" fill="#1c1c1c" letter-spacing="-0.121">Area</text>
<text transform="translate(606.85,45.30)" font-size="5.00" fill="#1c1c1c">Pan</text>
<text transform="translate(8.59,62.19)" font-size="5.80" fill="#0a0a0a" letter-spacing="0.130" stroke="#0a0a0a" stroke-width="0.10">Abadi MT Condensed Extra Bold</text>
<text transform="translate(122.83,62.16) rotate(0) scale(1.1141,1)" font-size="6.00" fill="#111" stroke="#111" stroke-width="0.12">24</text>
<text transform="translate(173.100,65.100) rotate(0.03) scale(0.960,1)" font-size="12.200" font-weight="bold" text-anchor="middle" fill="#111">A</text>
<text transform="translate(194.900,65.100) rotate(0.03) scale(0.960,1)" font-size="10.200" font-weight="bold" text-anchor="middle" fill="#111">A</text>
<text transform="translate(230.19,62.19)" font-size="5.80" fill="#0a0a0a" letter-spacing="0.139" stroke="#0a0a0a" stroke-width="0.10">Default</text>
<text transform="translate(427.39,62.19)" font-size="5.80" fill="#0a0a0a" letter-spacing="0.182" stroke="#0a0a0a" stroke-width="0.10">Black</text>
<text transform="translate(517.79,62.19)" font-size="5.80" fill="#0a0a0a" letter-spacing="0.161" stroke="#0a0a0a" stroke-width="0.10">Solidline</text>
<text transform="translate(34.03,77.11)" font-size="5.30" fill="#1a1a1a" letter-spacing="0.079">Toolbox</text>
<text transform="translate(13.68,111.66)" font-size="4.60" fill="#2a2a2a" letter-spacing="0.164">Details</text>
<text transform="translate(571.63,77.11)" font-size="5.30" fill="#1a1a1a" letter-spacing="0.021">Pattern Pieces</text>
<text transform="translate(514.21,179.90) rotate(-90) scale(1.1504,1)" font-size="5.30" fill="#ffffff" text-anchor="middle">Pattern Pieces</text>
<text transform="translate(514.21,230.30) rotate(-90) scale(1.1154,1)" font-size="5.30" fill="#2a2a2a" text-anchor="middle">Property Editor</text>
<text transform="translate(514.21,281.00) rotate(-90) scale(1.1398,1)" font-size="5.30" fill="#2a2a2a" text-anchor="middle">Layout Pages</text>
<text transform="translate(526.39,108.20) rotate(0) scale(1.4512,1)" font-size="5.00" fill="#222" stroke="#222" stroke-width="0.10">I</text>
<text transform="translate(535.40,108.20) rotate(0) scale(1.1534,1)" font-size="5.00" fill="#222" stroke="#222" stroke-width="0.10">L</text>
<text transform="translate(543.92,108.20) rotate(0) scale(1.0993,1)" font-size="5.00" fill="#222" stroke="#222" stroke-width="0.10">C</text>
<text transform="translate(552.73,108.20) rotate(0) scale(1.0626,1)" font-size="5.00" fill="#222" stroke="#222" stroke-width="0.10">P</text>
<text transform="translate(559.85,108.20)" font-size="5.00" fill="#222" letter-spacing="-0.046" stroke="#222" stroke-width="0.10">Name</text>
<text transform="translate(560.29,118.09)" font-size="5.80" fill="#111" letter-spacing="0.147">Back Bodice</text>
<text transform="translate(560.29,127.59)" font-size="5.80" fill="#111" letter-spacing="0.166">Front Bodice</text>
<text transform="translate(176.36,105.50) rotate(0.03) scale(0.9543,1)" font-size="3.60" fill="#000" font-weight="bold" stroke="#000" stroke-width="0.15">A</text>
<text transform="translate(237.69,91.40) rotate(0.03) scale(0.8297,1)" font-size="3.60" fill="#000" font-weight="bold" stroke="#000" stroke-width="0.15">A4</text>
<text transform="translate(354.18,111.60) rotate(0.03) scale(0.8785,1)" font-size="3.60" fill="#000" font-weight="bold" stroke="#000" stroke-width="0.15">A9</text>
<text transform="translate(376.38,270.10) rotate(0.03) scale(0.8852,1)" font-size="3.60" fill="#000" font-weight="bold" stroke="#000" stroke-width="0.15">A13</text>
<text transform="translate(488.55,107.40) rotate(0.03) scale(0.9896,1)" font-size="3.60" fill="#000" font-weight="bold" stroke="#000" stroke-width="0.15">A9_a1</text>
<text transform="translate(465.63,265.90) rotate(0.03) scale(1.0655,1)" font-size="3.60" fill="#000" font-weight="bold" stroke="#000" stroke-width="0.15">A13_a1</text>
<text transform="translate(181.73,330.70) rotate(0.03) scale(0.8469,1)" font-size="6.20" fill="#000" font-weight="bold" stroke="#000" stroke-width="0.35">Back Piece</text>
<text transform="translate(181.71,338.60) rotate(0.03) scale(0.9000,1)" font-size="6.20" fill="#000" font-weight="bold" stroke="#000" stroke-width="0.35">Fabric: 100% Organic Cotton</text>
<text transform="translate(181.70,346.40) rotate(0.03) scale(0.9199,1)" font-size="6.20" fill="#000" font-weight="bold" stroke="#000" stroke-width="0.35">Cut 1 (On fold)</text>
<text transform="translate(181.65,353.70) rotate(0.03) scale(1.0309,1)" font-size="6.20" fill="#000" font-weight="bold" stroke="#000" stroke-width="0.35">08-04-2025</text>
<text transform="translate(509.69,397.72) rotate(0.03)" font-size="4.50" fill="#151515" letter-spacing="0.081" stroke="#151515" stroke-width="0.22">XPos:</text>
<text transform="translate(555.68,397.72) rotate(0.03)" font-size="4.50" fill="#151515" letter-spacing="0.156" stroke="#151515" stroke-width="0.22">YPos:</text>
<text transform="translate(601.28,397.72) rotate(0.03)" font-size="4.50" fill="#151515" letter-spacing="-0.015" stroke="#151515" stroke-width="0.22">Units:</text>
<text transform="translate(537.18,397.72) rotate(0.03)" font-size="4.50" fill="#151515" letter-spacing="0.154" stroke="#151515" stroke-width="0.22">-58.06</text>
<text transform="translate(585.48,397.72) rotate(0.03)" font-size="4.50" fill="#151515" letter-spacing="-0.008" stroke="#151515" stroke-width="0.22">12.64</text>
<text transform="translate(623.28,397.72) rotate(0.03)" font-size="4.50" fill="#151515" letter-spacing="-0.369" stroke="#151515" stroke-width="0.22">cm</text>
<text transform="translate(638.500,398.700)" font-size="6.400" font-weight="bold" font-family="'Liberation Serif',serif" text-anchor="middle" fill="#fff">i</text>
</g>
</svg>
</body></html>
